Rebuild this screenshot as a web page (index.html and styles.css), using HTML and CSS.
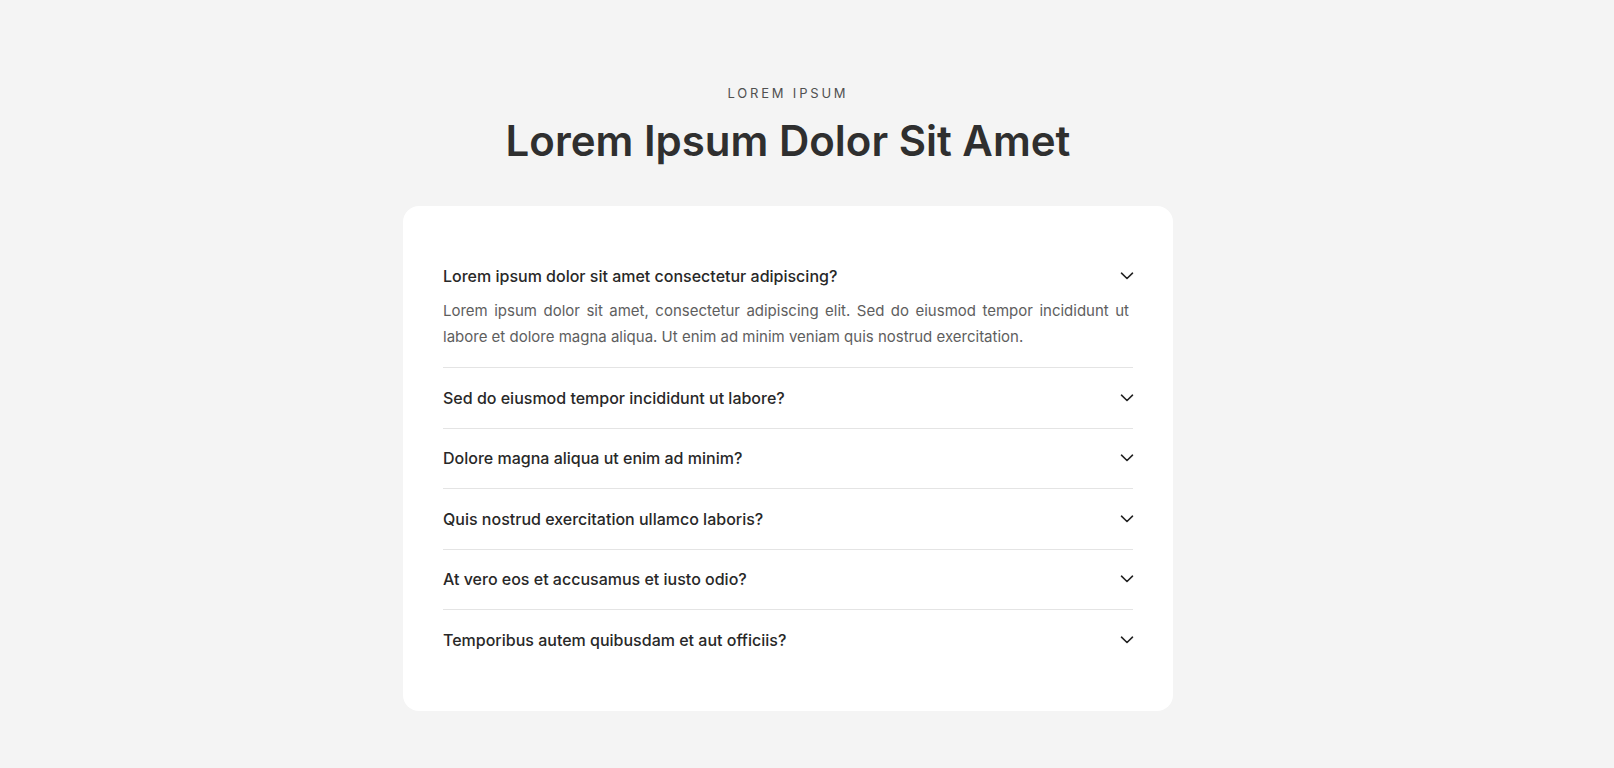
FILE: index.html
```html
<!DOCTYPE html>
<html lang="en">
<head>
<meta charset="utf-8">
<title>FAQ</title>
<link rel="stylesheet" href="styles.css">
</head>
<body>
<main class="page">
  <header class="intro">
    <p class="eyebrow">LOREM IPSUM</p>
    <h1 class="title">Lorem Ipsum Dolor Sit Amet</h1>
  </header>
  <section class="card">
    <div class="item open">
      <div class="question">
        <span>Lorem ipsum dolor sit amet consectetur adipiscing?</span>
        <svg class="chev" viewBox="0 0 14 8" width="14" height="8"><polyline points="1.5,1.2 7,6.5 12.5,1.2"/></svg>
      </div>
      <p class="answer">Lorem ipsum dolor sit amet, consectetur adipiscing elit. Sed do eiusmod tempor incididunt ut labore et dolore magna aliqua. Ut enim ad minim veniam quis nostrud exercitation.</p>
    </div>
    <div class="item">
      <div class="question">
        <span>Sed do eiusmod tempor incididunt ut labore?</span>
        <svg class="chev" viewBox="0 0 14 8" width="14" height="8"><polyline points="1.5,1.2 7,6.5 12.5,1.2"/></svg>
      </div>
    </div>
    <div class="item">
      <div class="question">
        <span>Dolore magna aliqua ut enim ad minim?</span>
        <svg class="chev" viewBox="0 0 14 8" width="14" height="8"><polyline points="1.5,1.2 7,6.5 12.5,1.2"/></svg>
      </div>
    </div>
    <div class="item">
      <div class="question">
        <span>Quis nostrud exercitation ullamco laboris?</span>
        <svg class="chev" viewBox="0 0 14 8" width="14" height="8"><polyline points="1.5,1.2 7,6.5 12.5,1.2"/></svg>
      </div>
    </div>
    <div class="item">
      <div class="question">
        <span>At vero eos et accusamus et iusto odio?</span>
        <svg class="chev" viewBox="0 0 14 8" width="14" height="8"><polyline points="1.5,1.2 7,6.5 12.5,1.2"/></svg>
      </div>
    </div>
    <div class="item">
      <div class="question">
        <span>Temporibus autem quibusdam et aut officiis?</span>
        <svg class="chev" viewBox="0 0 14 8" width="14" height="8"><polyline points="1.5,1.2 7,6.5 12.5,1.2"/></svg>
      </div>
    </div>
  </section>
</main>
</body>
</html>
```
FILE: styles.css
```css
* { box-sizing: border-box; }
html, body { margin: 0; padding: 0; }
body {
  background: #f4f4f4;
  font-family: Inter, "Noto Sans", sans-serif;
  color: #2b2b2b;
}
.page {
  padding: 83px 38px 58px 0;
  display: flex;
  flex-direction: column;
  align-items: center;
}
.intro {
  text-align: center;
}
.eyebrow {
  margin: 0;
  font-size: 13px;
  line-height: 20px;
  font-weight: 400;
  letter-spacing: 2.8px;
  color: #505050;
}
.title {
  margin: 13px 0 0;
  font-size: 42px;
  line-height: 50px;
  font-weight: 600;
  letter-spacing: 0;
  color: #2f2f2f;
}
.card {
  margin-top: 40px;
  width: 770px;
  background: #ffffff;
  border-radius: 16px;
  padding: 40px 40px 41px;
}
.item + .item {
  border-top: 1px solid #e4e4e4;
}
.question {
  display: flex;
  align-items: center;
  justify-content: space-between;
  padding: 18.5px 0 18.5px;
  font-size: 16px;
  line-height: 22.5px;
  font-weight: 500;
  color: #282828;
}
.chev {
  flex: none;
  margin-right: -1px;
  fill: none;
  stroke: #222;
  stroke-width: 1.6;
  stroke-linecap: round;
  stroke-linejoin: round;
}
.answer {
  margin: -8px 0 0;
  padding: 0 4px 16.5px 0;
  font-size: 15px;
  line-height: 26.5px;
  text-align: justify;
  color: #5e5e5e;
}
```
